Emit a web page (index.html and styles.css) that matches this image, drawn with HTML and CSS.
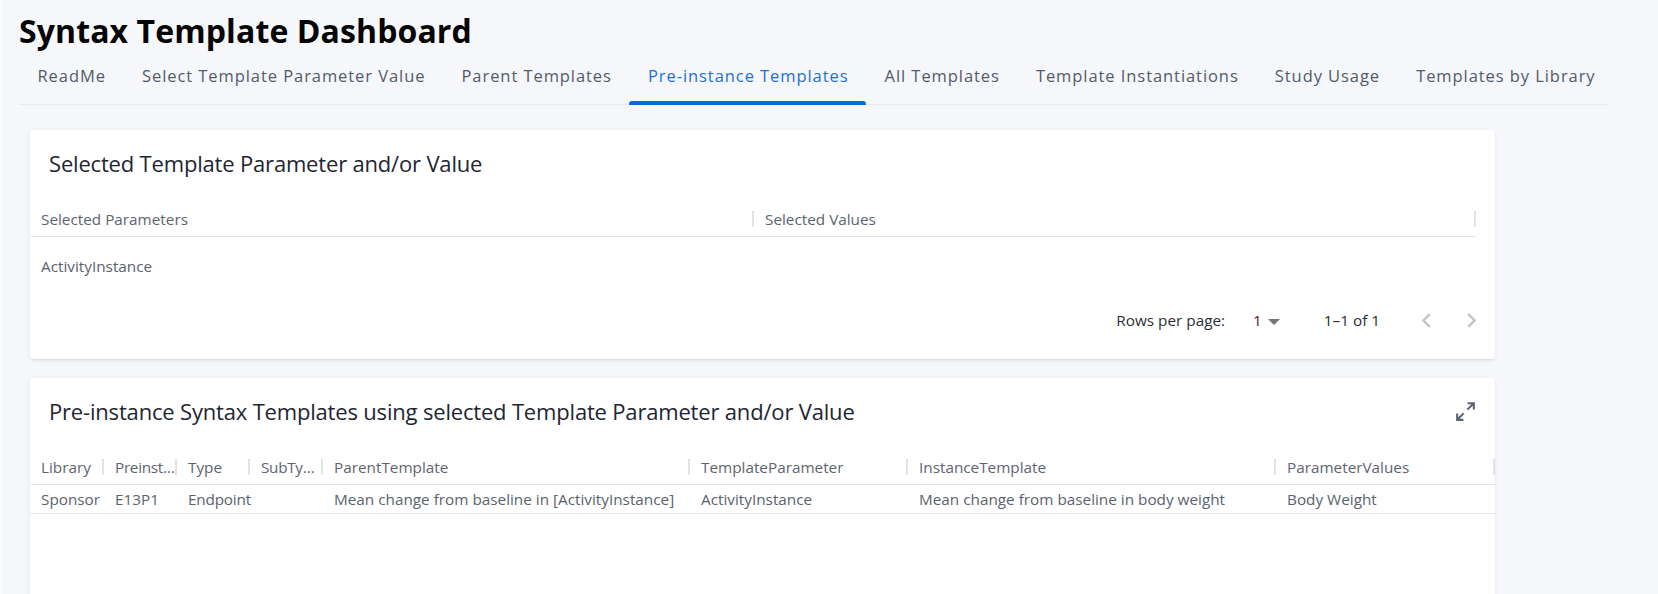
FILE: index.html
```html
<!DOCTYPE html>
<html lang="en">
<head>
<meta charset="utf-8">
<title>Syntax Template Dashboard</title>
<link rel="stylesheet" href="styles.css">
</head>
<body>
<div class="app">
  <h1 class="page-title">Syntax Template Dashboard</h1>
  <nav class="tabs">
    <a class="tab">ReadMe</a>
    <a class="tab">Select Template Parameter Value</a>
    <a class="tab">Parent Templates</a>
    <a class="tab active">Pre-instance Templates</a>
    <a class="tab">All Templates</a>
    <a class="tab">Template Instantiations</a>
    <a class="tab">Study Usage</a>
    <a class="tab">Templates by Library</a>
  </nav>

  <main class="content">
    <section class="card card-selected">
      <header class="card-title">
        <h2>Selected Template Parameter and/or Value</h2>
      </header>
      <table class="data-table table-selected">
        <colgroup>
          <col class="col-half-a">
          <col class="col-half-b">
        </colgroup>
        <thead>
          <tr>
            <th>Selected Parameters</th>
            <th>Selected Values</th>
          </tr>
        </thead>
        <tbody>
          <tr>
            <td>ActivityInstance</td>
            <td></td>
          </tr>
        </tbody>
      </table>
      <div class="table-footer">
        <span class="rpp-label">Rows per page:</span>
        <span class="rpp-select">
          <span class="rpp-value">1</span>
          <svg class="caret" width="12" height="6" viewBox="0 0 12 6"><polygon points="0,0 12,0 6,6" fill="#767676"/></svg>
        </span>
        <span class="page-text">1–1 of 1</span>
        <span class="page-btn">
          <svg width="29" height="29" viewBox="0 0 24 24"><path d="M15.41,16.58L10.83,12L15.41,7.41L14,6L8,12L14,18L15.41,16.58Z" fill="#c4c4c4"/></svg>
        </span>
        <span class="page-btn">
          <svg width="29" height="29" viewBox="0 0 24 24"><path d="M8.59,16.58L13.17,12L8.59,7.41L10,6L16,12L10,18L8.59,16.58Z" fill="#c4c4c4"/></svg>
        </span>
      </div>
    </section>

    <section class="card card-preinstance">
      <header class="card-title">
        <h2>Pre-instance Syntax Templates using selected Template Parameter and/or Value</h2>
        <svg class="expand-icon" width="25" height="25" viewBox="0 0 24 24"><path d="M10,21V19H6.41L10.91,14.5L9.5,13.09L5,17.59V14H3V21H10M14.5,10.91L19,6.41V10H21V3H14V5H17.59L13.09,9.5L14.5,10.91Z" fill="#5c6470"/></svg>
      </header>
      <table class="data-table table-preinstance">
        <colgroup>
          <col class="col-library">
          <col class="col-preinst">
          <col class="col-type">
          <col class="col-subtype">
          <col class="col-parent">
          <col class="col-param">
          <col class="col-instance">
          <col class="col-values">
        </colgroup>
        <thead>
          <tr>
            <th>Library</th>
            <th class="narrow" title="Preinstance Template">Preinst…</th>
            <th>Type</th>
            <th class="narrow" title="SubType">SubTy…</th>
            <th>ParentTemplate</th>
            <th>TemplateParameter</th>
            <th>InstanceTemplate</th>
            <th>ParameterValues</th>
          </tr>
        </thead>
        <tbody>
          <tr>
            <td>Sponsor</td>
            <td>E13P1</td>
            <td class="tight">Endpoint</td>
            <td></td>
            <td>Mean change from baseline in [ActivityInstance]</td>
            <td>ActivityInstance</td>
            <td>Mean change from baseline in body weight</td>
            <td>Body Weight</td>
          </tr>
        </tbody>
      </table>
    </section>
  </main>
</div>
</body>
</html>
```
FILE: styles.css
```css
html, body {
  margin: 0;
  height: 100%;
  overflow: hidden;
}

body {
  background: #f5f7fb;
  font-family: "Open Sans", "Noto Sans", sans-serif;
  box-shadow: inset 1px 0 0 #fbfcfe;
}

.app {
  width: 1590px;
  padding-left: 19px;
}

.page-title {
  margin: 11px 0 0 0;
  font-size: 32px;
  line-height: 40px;
  font-weight: 700;
  color: #050505;
  letter-spacing: 0.1px;
}

.tabs {
  display: flex;
  height: 53px;
  border-bottom: 1px solid #e9ebf0;
}

.tab {
  position: relative;
  display: flex;
  align-items: center;
  padding: 0 17.6px 4px 18.5px;
  font-size: 16.5px;
  letter-spacing: 0.93px;
  color: #525b68;
  white-space: nowrap;
  cursor: pointer;
}

.tab.active {
  color: #1e6fd6;
}

.tab.active::after {
  content: "";
  position: absolute;
  left: 0;
  right: 0;
  bottom: -1px;
  height: 4px;
  background: #0b6bd6;
  border-radius: 3px 3px 0 0;
}

.content {
  padding: 25px 0 0 11px;
}

.card {
  width: 1465px;
  background: #ffffff;
  border-radius: 4px;
  box-shadow: 0 3px 1px -2px rgba(0, 0, 0, 0.05), 0 2px 3px 0 rgba(0, 0, 0, 0.04), 0 1px 6px 0 rgba(0, 0, 0, 0.05);
}

.card + .card {
  margin-top: 19px;
}

.card-preinstance {
  height: 260px;
}

.card-title {
  display: flex;
  align-items: center;
  justify-content: space-between;
  padding: 17px 17px 23px 19px;
}

.card-title h2 {
  margin: 0;
  font-size: 22px;
  line-height: 32px;
  font-weight: 400;
  letter-spacing: -0.18px;
  color: #1e2631;
}

.expand-icon {
  display: block;
}

.data-table {
  table-layout: fixed;
  border-collapse: separate;
  border-spacing: 0;
  font-size: 15.3px;
}

.table-selected {
  width: 1446px;
}

.table-preinstance {
  width: 1465px;
}

.col-half-a { width: 724px; }
.col-half-b { width: 722px; }

.col-library { width: 74px; }
.col-preinst { width: 73px; }
.col-type { width: 73px; }
.col-subtype { width: 73px; }
.col-parent { width: 367px; }
.col-param { width: 218px; }
.col-instance { width: 368px; }
.col-values { width: 219px; }

.data-table th {
  position: relative;
  box-sizing: border-box;
  height: 35px;
  padding: 0 2px 0 11px;
  text-align: left;
  font-weight: 400;
  color: #5d6470;
  border-bottom: 1px solid #e3e5e9;
  white-space: nowrap;
  vertical-align: middle;
}

.data-table th.narrow {
  padding-right: 0;
  letter-spacing: -0.3px;
}

.data-table th::after {
  content: "";
  position: absolute;
  right: 0;
  top: 50%;
  width: 2px;
  height: 16px;
  margin-top: -8px;
  background: #e2e3e5;
}

.data-table td {
  box-sizing: border-box;
  padding: 0 0 0 11px;
  color: #5b626d;
  white-space: nowrap;
  vertical-align: middle;
}

.data-table td.tight {
  letter-spacing: -0.2px;
}

.table-selected td {
  height: 58px;
}

.table-preinstance td {
  height: 29px;
  border-bottom: 1px solid #e5e7eb;
}

.table-footer {
  display: flex;
  align-items: center;
  justify-content: flex-end;
  height: 50px;
  padding: 0 1px 14px 0;
  font-size: 15.3px;
  color: #2a2f36;
}

.rpp-label {
  margin-right: 28px;
}

.rpp-select {
  display: flex;
  align-items: center;
  margin-right: 44px;
}

.rpp-value {
  color: #4a1e22;
  margin-right: 6px;
}

.caret {
  display: block;
  margin-top: 3px;
}

.page-text {
  margin-right: 24px;
}

.page-btn {
  display: flex;
  align-items: center;
  justify-content: center;
  width: 45px;
  height: 45px;
}
```
